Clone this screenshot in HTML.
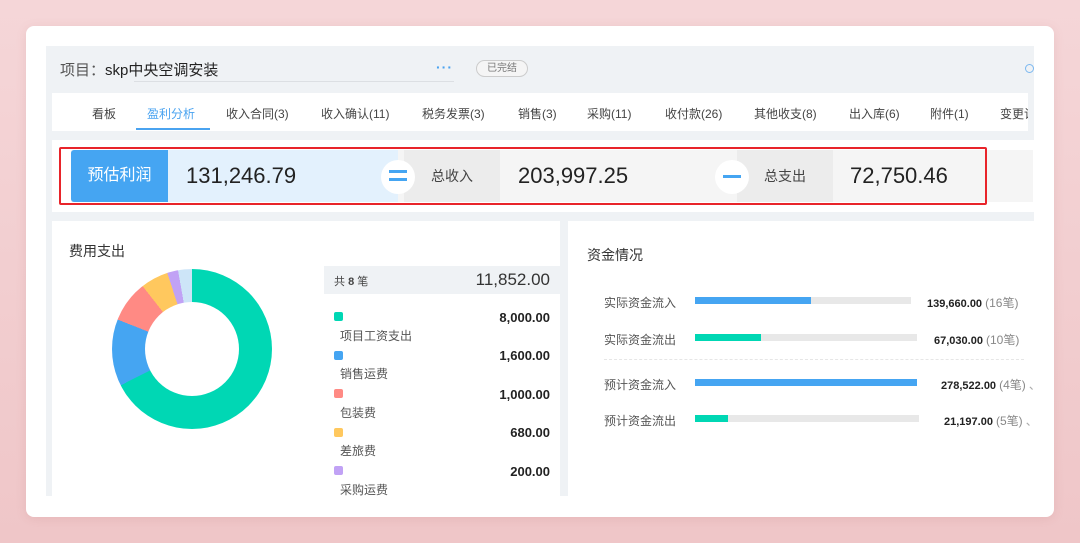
<!DOCTYPE html>
<html><head><meta charset="utf-8"><style>
*{margin:0;padding:0;box-sizing:border-box}
body{width:1080px;height:543px;overflow:hidden;background:linear-gradient(180deg,#f5d6d8,#efc6c8);font-family:"Liberation Sans","Noto Sans CJK SC",sans-serif;position:relative;color:#333}
.card{position:absolute;left:26px;top:26px;width:1028px;height:491px;background:#fff;border-radius:8px;box-shadow:0 2px 10px rgba(180,100,100,.15)}
.inner{position:absolute;left:46px;top:46px;width:988px;height:450px;background:#eff2f5;overflow:hidden}
.a{position:absolute;white-space:nowrap}
.tabs{position:absolute;left:6px;top:47px;width:976px;height:38px;background:#fff;overflow:hidden}
.tab{position:absolute;top:12px;font-size:12px;color:#444;white-space:nowrap}
.band{position:absolute;left:6px;top:94px;width:982px;height:72px;background:#fff}
.p{position:absolute;background:#fff}
.sq{position:absolute;width:9px;height:9px;border-radius:2px}
.v{position:absolute;right:10px;font-size:13px;font-weight:bold;color:#222}
.lb{position:absolute;font-size:12px;color:#555;white-space:nowrap}
.bar{position:absolute;height:7px;background:#e8e8e8}
.bar i{position:absolute;left:0;top:0;height:7px}
.rv{position:absolute;font-size:11px;font-weight:bold;color:#222;white-space:nowrap}
.rv span{font-weight:normal;color:#888;font-size:12px}
</style></head><body>
<div class="card"></div>
<div class="inner">
  <div class="a" style="left:14px;top:13px;font-size:15px;color:#555">项目：<span style="color:#222">skp中央空调安装</span></div>
  <div class="a" style="left:88px;top:35px;width:320px;height:1px;background:#dcdfe3"></div>
  <div class="a" style="left:390px;top:13px;font-size:14px;color:#4aa3f0;letter-spacing:1px;font-weight:bold">···</div>
  <div class="a" style="left:430px;top:14px;width:52px;height:17px;border:1px solid #ccc;border-radius:9px;font-size:10px;color:#777;text-align:center;line-height:15px;background:#f5f5f5">已完结</div>
  <div class="a" style="left:979px;top:18px;width:9px;height:9px;border:1.5px solid #7bb8f0;border-radius:50%"></div>
  <div class="tabs">
    <div class="tab" style="left:40px">看板</div>
    <div class="tab" style="left:95px;color:#4aa3f0">盈利分析</div>
    <div class="a" style="left:84px;top:35px;width:74px;height:2px;background:#4aa3f0"></div>
    <div class="tab" style="left:174px">收入合同(3)</div>
    <div class="tab" style="left:269px">收入确认(11)</div>
    <div class="tab" style="left:370px">税务发票(3)</div>
    <div class="tab" style="left:466px">销售(3)</div>
    <div class="tab" style="left:535px">采购(11)</div>
    <div class="tab" style="left:613px">收付款(26)</div>
    <div class="tab" style="left:702px">其他收支(8)</div>
    <div class="tab" style="left:797px">出入库(6)</div>
    <div class="tab" style="left:878px">附件(1)</div>
    <div class="tab" style="left:948px">变更记录</div>
  </div>
  <div class="band">
    <div class="a" style="left:19px;top:10px;width:962px;height:52px;background:#f5f5f5"></div>
    <div class="a" style="left:19px;top:10px;width:97px;height:52px;background:#45a5f2;color:#fff;font-size:16px;line-height:52px;text-align:center;border-radius:3px 0 0 3px">预估利润</div>
    <div class="a" style="left:116px;top:10px;width:230px;height:52px;background:#e3f1fd"></div>
    <div class="a" style="left:134px;top:10px;font-size:22px;line-height:52px;color:#222">131,246.79</div>
    <div class="a" style="left:352px;top:10px;width:96px;height:52px;background:#ececec;font-size:14px;line-height:52px;text-align:center;color:#444">总收入</div>
    <div class="a" style="left:466px;top:10px;font-size:22px;line-height:52px;color:#222">203,997.25</div>
    <div class="a" style="left:685px;top:10px;width:96px;height:52px;background:#ececec;font-size:14px;line-height:52px;text-align:center;color:#444">总支出</div>
    <div class="a" style="left:798px;top:10px;font-size:22px;line-height:52px;color:#222">72,750.46</div>
    <div class="a" style="left:329px;top:20px;width:34px;height:34px;border-radius:50%;background:#fff"></div>
    <div class="a" style="left:337px;top:30px;width:18px;height:3px;background:#45a5f2"></div>
    <div class="a" style="left:337px;top:38px;width:18px;height:3px;background:#45a5f2"></div>
    <div class="a" style="left:663px;top:20px;width:34px;height:34px;border-radius:50%;background:#fff"></div>
    <div class="a" style="left:671px;top:35px;width:18px;height:3px;background:#45a5f2"></div>
    <div class="a" style="left:7px;top:7px;width:928px;height:58px;border:2px solid #e8242a;border-radius:2px"></div>
  </div>
  <div class="p" style="left:6px;top:175px;width:508px;height:280px">
    <div class="a" style="left:17px;top:20px;font-size:14px;color:#333">费用支出</div>
    <div class="a" style="left:60px;top:48px;width:160px;height:160px;border-radius:50%;background:conic-gradient(#00d7b4 0 67.5%,#45a5f2 0 81%,#ff8a84 0 89.4%,#ffc85e 0 95%,#c1a2f5 0 97.2%,#cde5f8 0 100%)"></div>
    <div class="a" style="left:93px;top:81px;width:94px;height:94px;border-radius:50%;background:#fff"></div>
    <div class="a" style="left:272px;top:45px;width:236px;height:28px;background:#eff2f5"></div>
    <div class="a" style="left:282px;top:52px;font-size:11px;color:#444">共 <b>8</b> 笔</div>
    <div class="a" style="right:10px;top:49px;font-size:17px;color:#333">11,852.00</div>
    <div class="sq" style="left:282px;top:91px;background:#00d7b4"></div><div class="v" style="top:89px">8,000.00</div><div class="lb" style="left:288px;top:106px">项目工资支出</div>
    <div class="sq" style="left:282px;top:130px;background:#45a5f2"></div><div class="v" style="top:127px">1,600.00</div><div class="lb" style="left:288px;top:144px">销售运费</div>
    <div class="sq" style="left:282px;top:168px;background:#ff8a84"></div><div class="v" style="top:166px">1,000.00</div><div class="lb" style="left:288px;top:183px">包装费</div>
    <div class="sq" style="left:282px;top:207px;background:#ffc85e"></div><div class="v" style="top:204px">680.00</div><div class="lb" style="left:288px;top:221px">差旅费</div>
    <div class="sq" style="left:282px;top:245px;background:#c1a2f5"></div><div class="v" style="top:243px">200.00</div><div class="lb" style="left:288px;top:260px">采购运费</div>
  </div>
  <div class="p" style="left:522px;top:175px;width:470px;height:280px">
    <div class="a" style="left:19px;top:24px;font-size:14px;color:#333">资金情况</div>
    <div class="lb" style="left:36px;top:73px">实际资金流入</div>
    <div class="bar" style="left:127px;top:76px;width:216px"><i style="width:116px;background:#45a5f2"></i></div>
    <div class="rv" style="left:359px;top:73px">139,660.00 <span>(16笔)</span></div>
    <div class="lb" style="left:36px;top:110px">实际资金流出</div>
    <div class="bar" style="left:127px;top:113px;width:222px"><i style="width:66px;background:#00d7b4"></i></div>
    <div class="rv" style="left:366px;top:110px">67,030.00 <span>(10笔)</span></div>
    <div class="a" style="left:36px;top:138px;width:420px;border-top:1px dashed #e6e6e6"></div>
    <div class="lb" style="left:36px;top:155px">预计资金流入</div>
    <div class="bar" style="left:127px;top:158px;width:222px"><i style="width:222px;background:#45a5f2"></i></div>
    <div class="rv" style="left:373px;top:155px">278,522.00 <span>(4笔)</span> <span style="color:#aaa">、</span></div>
    <div class="lb" style="left:36px;top:191px">预计资金流出</div>
    <div class="bar" style="left:127px;top:194px;width:224px"><i style="width:33px;background:#00d7b4"></i></div>
    <div class="rv" style="left:376px;top:191px">21,197.00 <span>(5笔)</span> <span style="color:#aaa">、</span></div>
  </div>
</div>
</body></html>
